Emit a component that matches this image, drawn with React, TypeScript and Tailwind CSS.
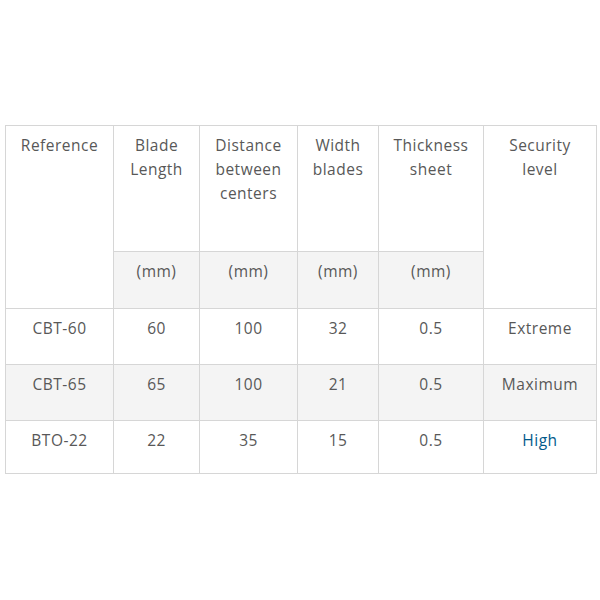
import React from "react";

const rows = [
  { ref: "CBT-60", blade: "60", dist: "100", width: "32", thick: "0.5", level: "Extreme", shade: false, h: "h-[56px]" },
  { ref: "CBT-65", blade: "65", dist: "100", width: "21", thick: "0.5", level: "Maximum", shade: true, h: "h-[56px]" },
  { ref: "BTO-22", blade: "22", dist: "35", width: "15", thick: "0.5", level: "High", shade: false, h: "h-[53px]" },
];

const cell = "border border-[#d6d6d6] px-1 pt-[7px] align-top text-center leading-6";

const App: React.FC = () => {
  return (
    <div className="w-[600px] h-[600px] bg-white pt-[125px] pl-[5px]" style={{ fontFamily: '"Open Sans", sans-serif' }}>
      <table className="table-fixed border-collapse w-[591px] text-[15.5px] tracking-[0.5px] text-[#585858]">
        <colgroup>
          <col className="w-[108px]" />
          <col className="w-[86px]" />
          <col className="w-[98px]" />
          <col className="w-[81px]" />
          <col className="w-[105px]" />
          <col className="w-[113px]" />
        </colgroup>
        <thead>
          <tr className="h-[126px]">
            <th rowSpan={2} className={cell + " font-normal"}>Reference</th>
            <th className={cell + " font-normal"}>Blade<br />Length</th>
            <th className={cell + " font-normal"}>Distance<br />between<br />centers</th>
            <th className={cell + " font-normal"}>Width<br />blades</th>
            <th className={cell + " font-normal"}>Thickness<br />sheet</th>
            <th rowSpan={2} className={cell + " font-normal"}>Security<br />level</th>
          </tr>
          <tr className="h-[57px] bg-[#f4f4f4]">
            <td className={cell}>(mm)</td>
            <td className={cell}>(mm)</td>
            <td className={cell}>(mm)</td>
            <td className={cell}>(mm)</td>
          </tr>
        </thead>
        <tbody>
          {rows.map((r) => (
            <tr key={r.ref} className={r.h + (r.shade ? " bg-[#f4f4f4]" : " bg-white")}>
              <td className={cell}>{r.ref}</td>
              <td className={cell}>{r.blade}</td>
              <td className={cell}>{r.dist}</td>
              <td className={cell}>{r.width}</td>
              <td className={cell}>{r.thick}</td>
              <td className={cell}>
                {r.level === "High" ? <span className="text-sky-800">High</span> : r.level}
              </td>
            </tr>
          ))}
        </tbody>
      </table>
    </div>
  );
};

export default App;
